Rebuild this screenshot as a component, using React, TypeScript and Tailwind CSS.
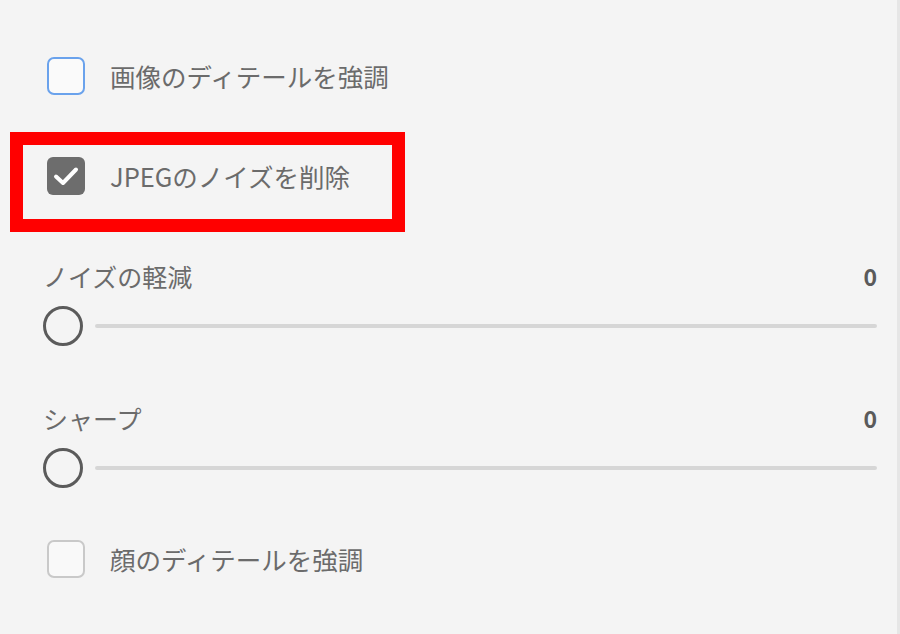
const font = "font-['Meiryo','Noto_Sans_CJK_JP',sans-serif]";

function Checkbox({ state }: { state: "focus" | "checked" | "off" }) {
  if (state === "checked") {
    return (
      <div className="flex h-[38px] w-[38px] shrink-0 items-center justify-center rounded-[6px] bg-[#6d6d6d]">
        <svg width="38" height="38" viewBox="0 0 38 38">
          <polyline
            points="9,19.5 16,26 29,12.5"
            fill="none"
            stroke="#ffffff"
            strokeWidth="4"
            strokeLinecap="round"
            strokeLinejoin="round"
          />
        </svg>
      </div>
    );
  }
  return (
    <div
      className={
        state === "focus"
          ? "h-[38px] w-[38px] shrink-0 rounded-[7px] border-[2.5px] border-[#6aa2ec] bg-[#fafafa]"
          : "h-[38px] w-[38px] shrink-0 rounded-[7px] border-[2.5px] border-[#c9c9c9] bg-[#f9f9f9]"
      }
    />
  );
}

function SliderBlock({ label, value }: { label: string; value: number }) {
  return (
    <div className="flex flex-col gap-[15px]">
      <div className="flex h-[30px] items-center justify-between">
        <span className="text-[25px] leading-[30px] text-[#6b6b6b]">{label}</span>
        <span className="text-[23px] font-bold leading-[30px] text-[#5a5a5a]">{value}</span>
      </div>
      <div className="flex h-[40px] items-center">
        <div className="h-[40px] w-[40px] shrink-0 rounded-full border-[3px] border-[#5b5b5b] bg-[#f4f4f4]" />
        <div className="ml-[12px] h-[4px] flex-1 rounded-full bg-[#d6d6d6]" />
      </div>
    </div>
  );
}

export default function App() {
  return (
    <div className={`h-[634px] w-[900px] overflow-hidden border-r-[3px] border-[#e6e6e6] bg-[#f4f4f4] ${font}`}>
      <div className="flex flex-col pl-[43px] pr-[20px]">
        {/* 画像のディテール */}
        <div className="mt-[57px] flex h-[38px] items-center gap-[25px] pl-[4px]">
          <Checkbox state="focus" />
          <span className="text-[25.5px] leading-[30px] text-[#6b6b6b]">画像のディテールを強調</span>
        </div>

        {/* highlighted row */}
        <div className="ml-[-33px] mt-[37px] h-[100px] w-[395px] border-[13px] border-[#ff0000] pl-[24px] pt-[12px]">
          <div className="flex h-[38px] items-center gap-[25px]">
            <Checkbox state="checked" />
            <span className="text-[25.5px] leading-[30px] text-[#6b6b6b]">JPEGのノイズを削除</span>
          </div>
        </div>

        <div className="mt-[29px]">
          <SliderBlock label="ノイズの軽減" value={0} />
        </div>

        <div className="mt-[57px]">
          <SliderBlock label="シャープ" value={0} />
        </div>

        {/* 顔のディテール */}
        <div className="mt-[52px] flex h-[38px] items-center gap-[25px] pl-[4px]">
          <Checkbox state="off" />
          <span className="text-[25.5px] leading-[30px] text-[#6b6b6b]">顔のディテールを強調</span>
        </div>
      </div>
    </div>
  );
}
